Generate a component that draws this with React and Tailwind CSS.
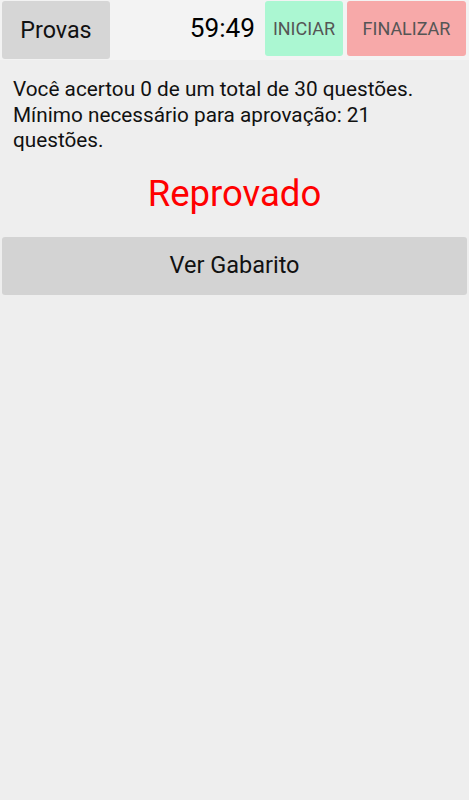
export default function App() {
  return (
    <div className="min-h-[800px] w-[469px] bg-[#eeeeee]" style={{ fontFamily: 'Roboto, "Noto Sans", sans-serif' }}>
      <div className="flex h-[60px] items-start bg-[#f3f3f3]">
        <div className="ml-[2px] mt-[1px] flex h-[58px] w-[108px] items-center justify-center rounded-[3px] bg-[#d6d6d6] text-[23.3px] text-[#111]">
          Provas
        </div>
        <div className="flex h-[58px] flex-1 items-center justify-end pr-[10px] text-[26.2px] text-black">
          59:49
        </div>
        <div className="mt-[1px] flex h-[55px] w-[78px] items-center justify-center rounded-[3px] bg-[#abf7d2] text-[18px] text-[#555]">
          INICIAR
        </div>
        <div className="ml-[4px] mr-[3px] mt-[1px] flex h-[55px] w-[119px] items-center justify-center rounded-[3px] bg-[#f7a9a9] text-[18px] text-[#555]">
          FINALIZAR
        </div>
      </div>
      <div className="px-[13px] pt-[17px] text-[20.75px] leading-[25.5px] text-[#111]">
        Você acertou 0 de um total de 30 questões.<br />
        Mínimo necessário para aprovação: 21 questões.
      </div>
      <div className="mt-[17px] text-center text-[36.5px] leading-[46px] text-[#ff0000]">Reprovado</div>
      <div className="mx-[2px] mt-[20px] flex h-[58px] items-center justify-center rounded-[3px] bg-[#d3d3d3] text-[23.5px] text-[#111]">
        Ver Gabarito
      </div>
    </div>
  );
}
